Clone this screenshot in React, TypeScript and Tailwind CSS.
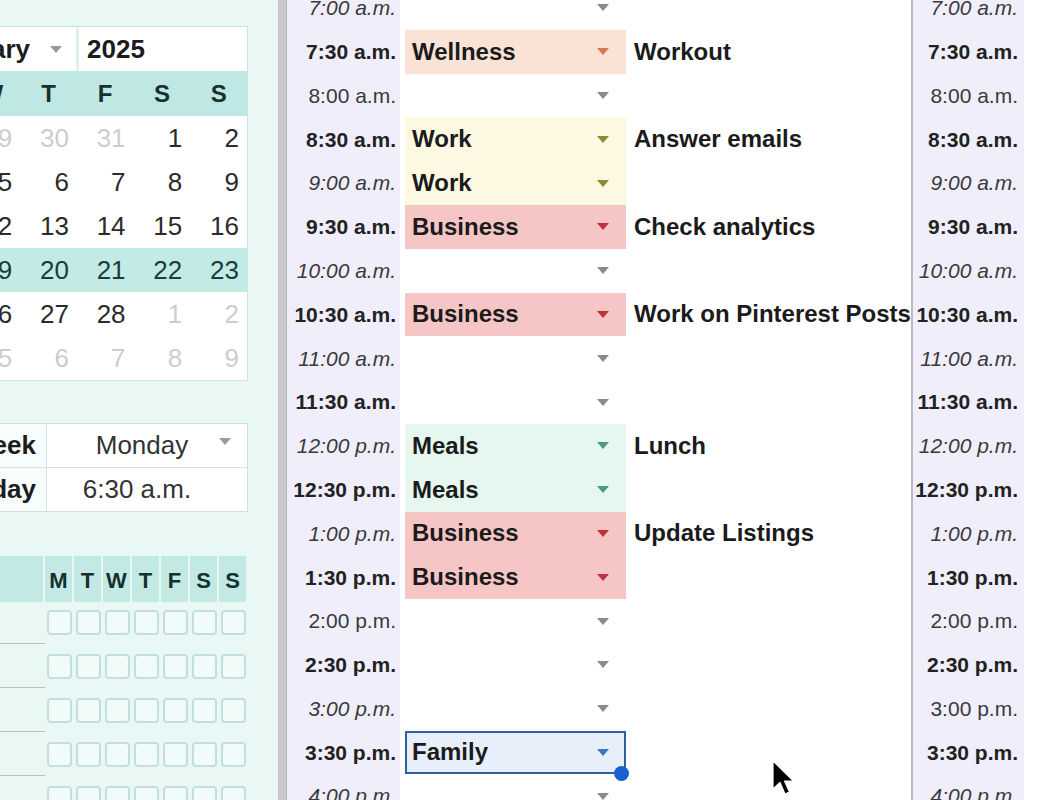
import React from 'react';

type Cat = 'Wellness' | 'Work' | 'Business' | 'Meals' | 'Family' | '';

const catStyle: Record<string, { bg: string; arrow: string }> = {
  Wellness: { bg: 'bg-[#fae3d6]', arrow: 'border-t-[#d8784f]' },
  Work: { bg: 'bg-[#fdf8e2]', arrow: 'border-t-[#8c8a35]' },
  Business: { bg: 'bg-[#f6c5c5]', arrow: 'border-t-[#c0303a]' },
  Meals: { bg: 'bg-[#e6f7ef]', arrow: 'border-t-[#4a9a84]' },
  Family: { bg: 'bg-[#e6effa]', arrow: 'border-t-[#3a76c4]' },
  '': { bg: 'bg-white', arrow: 'border-t-[#8b8b8b]' },
};

// time label, left style, right style: b = bold, i = italic, n = normal
const rows: { t: string; l: string; r: string; cat: Cat; task?: string }[] = [
  { t: '7:00 a.m.', l: 'i', r: 'i', cat: '' },
  { t: '7:30 a.m.', l: 'b', r: 'b', cat: 'Wellness', task: 'Workout' },
  { t: '8:00 a.m.', l: 'n', r: 'n', cat: '' },
  { t: '8:30 a.m.', l: 'b', r: 'b', cat: 'Work', task: 'Answer emails' },
  { t: '9:00 a.m.', l: 'i', r: 'i', cat: 'Work' },
  { t: '9:30 a.m.', l: 'b', r: 'b', cat: 'Business', task: 'Check analytics' },
  { t: '10:00 a.m.', l: 'i', r: 'i', cat: '' },
  { t: '10:30 a.m.', l: 'b', r: 'b', cat: 'Business', task: 'Work on Pinterest Posts' },
  { t: '11:00 a.m.', l: 'i', r: 'i', cat: '' },
  { t: '11:30 a.m.', l: 'b', r: 'b', cat: '' },
  { t: '12:00 p.m.', l: 'i', r: 'i', cat: 'Meals', task: 'Lunch' },
  { t: '12:30 p.m.', l: 'b', r: 'b', cat: 'Meals' },
  { t: '1:00 p.m.', l: 'i', r: 'i', cat: 'Business', task: 'Update Listings' },
  { t: '1:30 p.m.', l: 'b', r: 'b', cat: 'Business' },
  { t: '2:00 p.m.', l: 'n', r: 'n', cat: '' },
  { t: '2:30 p.m.', l: 'b', r: 'b', cat: '' },
  { t: '3:00 p.m.', l: 'i', r: 'n', cat: '' },
  { t: '3:30 p.m.', l: 'b', r: 'b', cat: 'Family' },
  { t: '4:00 p.m.', l: 'i', r: 'i', cat: '' },
];

const timeClass = (s: string) =>
  s === 'b'
    ? 'font-bold text-[#222]'
    : s === 'i'
    ? 'italic text-[#3a3a3a]'
    : 'text-[#3a3a3a]';

const Arrow = ({ color }: { color: string }) => (
  <span
    className={`w-0 h-0 border-l-[6px] border-r-[6px] border-t-[7px] border-l-transparent border-r-transparent ${color}`}
  />
);

const calRows: { n: number; dim?: boolean }[][] = [
  [{ n: 27, dim: true }, { n: 28, dim: true }, { n: 29, dim: true }, { n: 30, dim: true }, { n: 31, dim: true }, { n: 1 }, { n: 2 }],
  [{ n: 3 }, { n: 4 }, { n: 5 }, { n: 6 }, { n: 7 }, { n: 8 }, { n: 9 }],
  [{ n: 10 }, { n: 11 }, { n: 12 }, { n: 13 }, { n: 14 }, { n: 15 }, { n: 16 }],
  [{ n: 17 }, { n: 18 }, { n: 19 }, { n: 20 }, { n: 21 }, { n: 22 }, { n: 23 }],
  [{ n: 24 }, { n: 25 }, { n: 26 }, { n: 27 }, { n: 28 }, { n: 1, dim: true }, { n: 2, dim: true }],
  [{ n: 3, dim: true }, { n: 4, dim: true }, { n: 5, dim: true }, { n: 6, dim: true }, { n: 7, dim: true }, { n: 8, dim: true }, { n: 9, dim: true }],
];

const days = ['M', 'T', 'W', 'T', 'F', 'S', 'S'];

const LeftPanel = () => (
  <div className="w-[278px] shrink-0 h-full bg-[#e9f8f4] overflow-hidden">
    <div className="w-[399px] -ml-[151px] pt-[26px] flex flex-col">
      {/* calendar */}
      <div className="border border-[#cde3df]">
        <div className="flex h-[44px] bg-[#e3efed] gap-[3px]">
          <div className="w-[226px] bg-white flex items-center justify-end pr-[14px] gap-[20px]">
            <span className="text-[26px] font-bold text-[#1c1c1c]">February</span>
            <Arrow color="border-t-[#9a9a9a]" />
          </div>
          <div className="flex-1 bg-white flex items-center pl-[8px]">
            <span className="text-[26px] font-bold text-[#1c1c1c]">2025</span>
          </div>
        </div>
        <div className="grid grid-cols-7 h-[45px] bg-[#bfe8e4]">
          {days.map((d, i) => (
            <div key={i} className="flex items-center justify-center text-[24px] font-bold text-[#16302d]">
              {d}
            </div>
          ))}
        </div>
        {calRows.map((r, ri) => (
          <div key={ri} className={`grid grid-cols-7 h-[44px] ${ri === 3 ? 'bg-[#c2ebe6]' : 'bg-white'}`}>
            {r.map((c, ci) => (
              <div
                key={ci}
                className={`flex items-center justify-end pr-[8px] text-[26px] ${
                  c.dim ? 'text-[#cdcdcd]' : ri === 3 ? 'text-[#1f3b38]' : 'text-[#2b2b2b]'
                }`}
              >
                {c.n}
              </div>
            ))}
          </div>
        ))}
      </div>

      {/* start settings */}
      <div className="mt-[42px] border border-[#d2dedc]">
        <div className="flex h-[44px] border-b border-[#d8e2e0]">
          <div className="w-[197px] bg-[#f7fdfc] flex items-center justify-end pr-[10px] border-r border-[#d8e2e0] text-[26px] font-bold text-[#1c1c1c]">
            Start of week
          </div>
          <div className="flex-1 bg-white flex items-center relative">
            <span className="w-full text-center text-[26px] text-[#333] pr-[10px]">Monday</span>
            <span className="absolute right-[16px] top-[18px]">
              <Arrow color="border-t-[#9a9a9a]" />
            </span>
          </div>
        </div>
        <div className="flex h-[43px]">
          <div className="w-[197px] bg-[#f7fdfc] flex items-center justify-end pr-[10px] border-r border-[#d8e2e0] text-[26px] font-bold text-[#1c1c1c]">
            Start of day
          </div>
          <div className="flex-1 bg-white flex items-center justify-center pr-[20px] text-[26px] text-[#333]">
            6:30 a.m.
          </div>
        </div>
      </div>

      {/* habit tracker */}
      <div className="mt-[44px] flex h-[46px] gap-[2px]">
        <div className="w-[194px] bg-[#c3e9e4]" />
        {days.map((d, i) => (
          <div
            key={i}
            className="w-[27px] bg-[#c3e9e4] flex items-end justify-center pb-[5px] text-[22px] font-bold text-[#16302d]"
          >
            {d}
          </div>
        ))}
      </div>
      {[0, 1, 2, 3, 4].map((r) => (
        <div key={r} className="flex h-[44px]">
          <div className="w-[196px] border-b border-[#b9c4c2] mb-[2px]" />
          <div className="flex pt-[8px]">
            {days.map((_, i) => (
              <div key={i} className="w-[29px] flex justify-center">
                <div className="w-[25px] h-[25px] rounded-[4px] border-2 border-[#c2e0db] bg-[#f1fbf9]" />
              </div>
            ))}
          </div>
        </div>
      ))}
    </div>
  </div>
);

const Schedule = () => (
  <div className="flex-1 h-full overflow-hidden">
    <div className="-mt-[14px] flex flex-col">
      {rows.map((r, i) => {
        const st = catStyle[r.cat];
        const sel = r.cat === 'Family';
        return (
          <div key={i} className="flex h-[43.8px]">
            <div
              className={`w-[113px] shrink-0 bg-[#efeefa] flex items-center justify-end pr-[4px] text-[21px] whitespace-nowrap ${timeClass(r.l)}`}
            >
              {r.t}
            </div>
            <div className="w-[5px] shrink-0" />
            <div
              className={`w-[221px] shrink-0 relative flex items-center justify-between ${st.bg} ${
                sel ? 'border-2 border-[#2f5ea3] pl-[5px] pr-[15px] z-10' : 'pl-[7px] pr-[17px]'
              }`}
            >
              <span className="text-[24px] font-bold text-[#1b1b1b]">{r.cat}</span>
              <Arrow color={st.arrow} />
              {sel && (
                <span className="absolute -right-[5px] -bottom-[9px] w-[15px] h-[15px] rounded-full bg-[#1b5fd3]" />
              )}
            </div>
            <div className="w-[285px] shrink-0 flex items-center pl-[8px] overflow-hidden whitespace-nowrap text-[24px] font-bold text-[#1b1b1b]">
              {r.task}
            </div>
            <div className="w-[2px] shrink-0 bg-[#bab9c9]" />
            <div
              className={`w-[111px] shrink-0 bg-[#efeefa] flex items-center justify-end pr-[6px] text-[21px] whitespace-nowrap ${timeClass(r.r)}`}
            >
              {r.t}
            </div>
            <div className="flex-1" />
          </div>
        );
      })}
    </div>
  </div>
);

export default function App() {
  return (
    <div className="relative w-[1042px] h-[800px] overflow-hidden flex bg-white font-['Liberation_Sans',Arial,sans-serif]">
      <LeftPanel />
      <div className="w-[9px] shrink-0 h-full bg-[#c9c9c9] border-r border-[#b5b5b5]" />
      <Schedule />
      <svg className="absolute left-[772px] top-[760px]" width="24" height="38" viewBox="0 0 24 38">
        <path d="M1 1 L1 29 L8 22.5 L13 34 L17.5 32 L12.5 21 L21.5 21 Z" fill="#000" stroke="#fff" strokeWidth="1.2" strokeLinejoin="round" />
      </svg>
    </div>
  );
}
